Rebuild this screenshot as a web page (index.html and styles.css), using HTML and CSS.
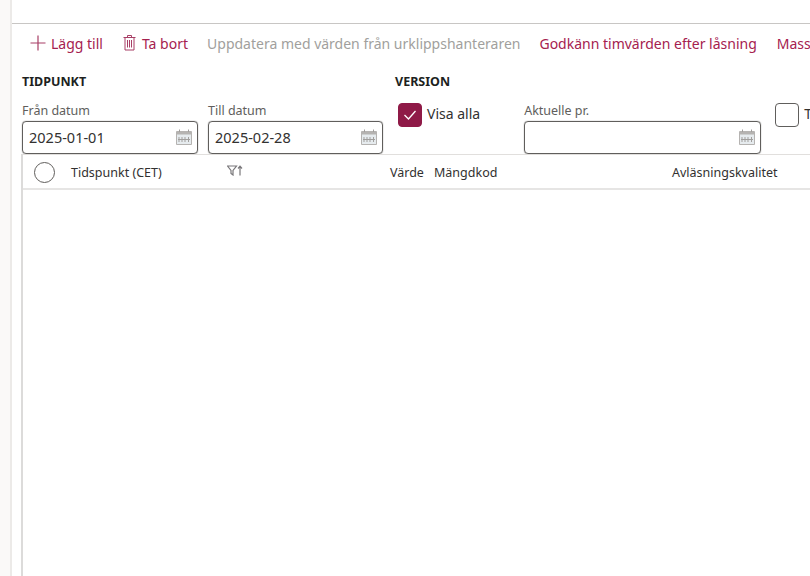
FILE: index.html
```html
<!DOCTYPE html>
<html lang="sv">
<head>
  <meta charset="UTF-8" />
  <title>Timvärden</title>
  <link rel="stylesheet" href="styles.css">
</head>
<body>
  <div class="sidofalt"></div>
  <main class="innehall">
    <div class="toppfalt"></div>

    <!-- verktygsrad -->
    <div class="verktyg">
      <span class="knapp knapp-lagg">
        <svg width="16" height="16" viewBox="0 0 16 16"><path d="M8 0.5V15.5M0.5 8H15.5" stroke="#a83f66" stroke-width="1.2" fill="none"/></svg>
        Lägg till
      </span>
      <span class="knapp knapp-ta">
        <svg width="13" height="16" viewBox="0 0 13 16" fill="none" stroke="#a83f66" stroke-width="1"><path d="M0.5 2.5H12.5M4.5 2.5V0.5H8.5V2.5M2 2.5V15H11V2.5M4.5 5V12.5M6.5 5V12.5M8.5 5V12.5"/></svg>
        Ta bort
      </span>
      <span class="knapp inaktiv">Uppdatera med värden från urklippshanteraren</span>
      <span class="knapp knapp-godkann">Godkänn timvärden efter låsning</span>
      <span class="knapp">Massuppdatera</span>
    </div>

    <!-- filter -->
    <div class="filter">
      <section class="grupp grupp-tid">
        <h2>TIDPUNKT</h2>
        <div class="falt-rad">
          <div class="falt falt-fran">
            <label>Från datum</label>
            <div class="inmatning">2025-01-01
              <svg class="kalender" width="16" height="16" viewBox="0 0 16 16"><use href="#kal"/></svg>
            </div>
          </div>
          <div class="falt falt-till">
            <label>Till datum</label>
            <div class="inmatning">2025-02-28
              <svg class="kalender" width="16" height="16" viewBox="0 0 16 16"><use href="#kal"/></svg>
            </div>
          </div>
        </div>
      </section>
      <section class="grupp grupp-version">
        <h2>VERSION</h2>
        <div class="falt-rad">
          <div class="kryss-rad">
            <span class="kryss ikryssad">
              <svg width="14" height="12" viewBox="0 0 14 12"><path d="M1.5 6L5.5 10L12.5 2" stroke="#fff" stroke-width="1.3" fill="none"/></svg>
            </span>
            Visa alla
          </div>
          <div class="falt falt-aktuell">
            <label>Aktuelle pr.</label>
            <div class="inmatning">
              <svg class="kalender" width="16" height="16" viewBox="0 0 16 16"><use href="#kal"/></svg>
            </div>
          </div>
          <div class="kryss-rad kryss-sista">
            <span class="kryss"></span>
            Timvärden
          </div>
        </div>
      </section>
    </div>

    <!-- tabell -->
    <div class="tabell">
      <div class="tabell-huvud">
        <span class="cirkel"></span>
        <span class="kol kol-tid">Tidspunkt (CET)</span>
        <svg class="filterikon" width="18" height="11" viewBox="0 0 18 11" fill="none" stroke="#79777a" stroke-width="1.2"><path d="M0.5 1H9.5L6 5.5V10L4 8.5V5.5ZM13 10.5V1.5M11 3.5L13 1.2L15 3.5"/></svg>
        <span class="kol kol-varde">Värde</span>
        <span class="kol kol-mangd">Mängdkod</span>
        <span class="kol kol-kvalitet">Avläsningskvalitet</span>
      </div>
    </div>
  </main>

  <svg width="0" height="0" class="dold">
    <symbol id="kal" viewBox="0 0 16 16">
      <path d="M0.5 2.5H15.5V15.5H0.5Z" fill="#e6ebee" stroke="#b5b3b1"/>
      <path d="M1 2.5H15V5.5H1Z" fill="#b5b3b1"/>
      <path d="M3.5 0.5V3M12.5 0.5V3M3 8V13M6 8V13M9 8V13M12.5 8V13M2 10.5H14" stroke="#a19f9d" fill="none"/>
    </symbol>
  </svg>
</body>
</html>
```

FILE: styles.css
```css
html, body {
  height: 100%;
}

body {
  margin: 0;
  display: flex;
  overflow: hidden;
  background: #fff;
  color: #323130;
  font-family: "Noto Sans", Arial, sans-serif;
}

.sidofalt {
  width: 10px;
  flex: none;
  background: #faf9f8;
  border-right: 2px solid #eceae8;
}

.innehall {
  flex: 1;
  min-width: 0;
  display: flex;
  flex-direction: column;
  overflow: hidden;
}

.toppfalt {
  height: 23px;
  flex: none;
  border-bottom: 1px solid #c8c6c4;
}

.verktyg {
  display: flex;
  align-items: center;
  height: 38px;
  padding-left: 18px;
  white-space: nowrap;
  font-size: 14px;
  color: #a5214f;
}

.knapp {
  display: inline-flex;
  align-items: center;
  margin-right: 19px;
}

.knapp-lagg {
  margin-right: 20px;
}

.knapp-lagg svg {
  margin-right: 5px;
}

.knapp-ta svg {
  margin-right: 6px;
}

.knapp-godkann {
  margin-right: 20px;
}

.inaktiv {
  color: #a19f9d;
}

.filter {
  display: flex;
  padding-left: 10px;
  margin-top: 12px;
}

.grupp h2 {
  margin: 0;
  height: 16px;
  line-height: 16px;
  font-size: 12.5px;
  font-weight: 700;
  color: #201f1e;
}

.grupp-tid {
  width: 373px;
  flex: none;
}

.grupp-version {
  flex: none;
}

.falt-rad {
  display: flex;
  margin-top: 13px;
}

.falt label {
  display: block;
  height: 16px;
  line-height: 16px;
  font-size: 12.5px;
  color: #605e5c;
}

.falt-fran {
  width: 176px;
  margin-right: 10px;
}

.falt-till {
  width: 175px;
}

.falt-aktuell {
  width: 237px;
  margin-left: 43px;
  flex: none;
}

.inmatning {
  box-sizing: border-box;
  height: 33px;
  margin-top: 2px;
  padding: 0 5px 2px 6px;
  display: flex;
  align-items: center;
  justify-content: space-between;
  border: 1px solid #605e5c;
  border-radius: 4px;
  box-shadow: 0 0 1px #605e5c;
  font-size: 14.5px;
  color: #323130;
}

.inmatning .kalender {
  margin-left: auto;
}

.kryss-rad {
  display: flex;
  align-items: flex-start;
  flex: none;
  padding-left: 3px;
  font-size: 14px;
  line-height: 22px;
  white-space: nowrap;
}

.kryss-sista {
  margin-left: 11px;
}

.kryss {
  box-sizing: border-box;
  width: 24px;
  height: 24px;
  margin-right: 5px;
  display: flex;
  align-items: center;
  justify-content: center;
  border: 1px solid #605e5c;
  border-radius: 4px;
}

.ikryssad {
  background: #8f1a47;
  border-color: #8f1a47;
}

.kryss-rad:first-child {
  padding-right: 1px;
}

.tabell {
  flex: 1;
  margin-left: 9px;
  border-left: 2px solid #dcdbda;
}

.tabell-huvud {
  display: flex;
  align-items: center;
  height: 31px;
  padding-top: 2px;
  border-top: 1px solid #e1dfdd;
  border-bottom: 2px solid #e6e5e4;
  font-size: 12.5px;
  white-space: nowrap;
  color: #323130;
}

.cirkel {
  box-sizing: border-box;
  width: 21px;
  height: 21px;
  margin-left: 11px;
  flex: none;
  border: 1px solid #605e5c;
  border-radius: 50%;
}

.kol {
  flex: none;
}

.kol-tid {
  width: 156px;
  margin-left: 16px;
}

.filterikon {
  flex: none;
  margin-bottom: 4px;
}

.kol-varde {
  margin-left: 145px;
  width: 44px;
}

.kol-mangd {
  width: 238px;
}

.dold {
  position: absolute;
}
```
